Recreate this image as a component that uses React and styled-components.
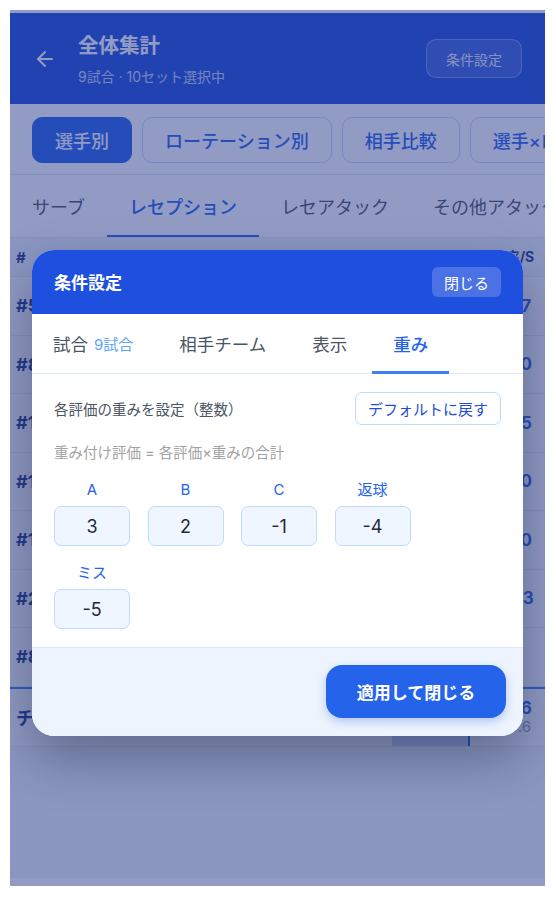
import React from "react";
import styled, { createGlobalStyle } from "styled-components";
import { ArrowLeft } from "lucide-react";

const GlobalStyle = createGlobalStyle`
  html, body { margin: 0; padding: 0; background: #ffffff; }
  body { font-family: "Inter", "Noto Sans CJK JP", sans-serif; }
  * { box-sizing: border-box; }
`;

const Frame = styled.div`
  padding: 10px 11px 12px 10px;
`;

const Screen = styled.div`
  position: relative;
  width: 535px;
  height: 876px;
  overflow: hidden;
  background: #ffffff;
  padding-top: 3px;
  display: flex;
  flex-direction: column;
`;

const Header = styled.header`
  height: 91px;
  flex-shrink: 0;
  background: #1d4ed8;
  display: flex;
  align-items: center;
  gap: 21px;
  padding: 0 23px 0 23px;
  color: #ffffff;
`;

const TitleBlock = styled.div`
  flex: 1;
  display: flex;
  flex-direction: column;
  gap: 7px;
  padding-top: 2px;
`;

const Title = styled.div`
  font-size: 20.5px;
  font-weight: 700;
  line-height: 28px;
`;

const Sub = styled.div`
  font-size: 14px;
  line-height: 20px;
  color: rgba(255, 255, 255, 0.75);
`;

const GhostButton = styled.button`
  width: 96px;
  height: 39px;
  border-radius: 10px;
  border: 1px solid rgba(255, 255, 255, 0.3);
  background: rgba(255, 255, 255, 0.12);
  color: rgba(255, 255, 255, 0.9);
  font-family: inherit;
  font-size: 14px;
`;

const ChipRow = styled.div`
  display: flex;
  gap: 10px;
  padding: 13px 0 0 22px;
  height: 71px;
  flex-shrink: 0;
  overflow: hidden;
  border-bottom: 1px solid #e2e8f0;
`;

const Chip = styled.button`
  flex-shrink: 0;
  height: 46px;
  padding: 0 22px;
  border-radius: 10px;
  border: 1px solid ${(p) => (p.$active ? "#2563eb" : "#bfdbfe")};
  background: ${(p) => (p.$active ? "#2563eb" : "#ffffff")};
  color: ${(p) => (p.$active ? "#ffffff" : "#2563eb")};
  font-family: inherit;
  font-size: 18px;
  font-weight: 500;
  white-space: nowrap;
`;

const TabRow = styled.div`
  display: flex;
  height: 63px;
  flex-shrink: 0;
  border-bottom: 1px solid #e2e8f0;
  overflow: hidden;
`;

const Tab = styled.div`
  position: relative;
  flex-shrink: 0;
  display: flex;
  align-items: center;
  padding: 0 22px;
  font-size: 18px;
  white-space: nowrap;
  color: ${(p) => (p.$active ? "#2563eb" : "#4b5563")};
  font-weight: ${(p) => (p.$active ? 500 : 400)};
  &::after {
    content: "";
    display: ${(p) => (p.$active ? "block" : "none")};
    position: absolute;
    left: 0;
    right: 0;
    bottom: -1px;
    height: 3px;
    background: #2563eb;
  }
`;

const Table = styled.div`
  display: flex;
  flex-direction: column;
  background: #f8fafc;
`;

const Row = styled.div`
  display: grid;
  grid-template-columns: 1fr 78px 25px 50px;
  align-items: center;
  height: ${(p) => p.$h}px;
  border-bottom: 1px solid #e2e8f0;
  border-top: ${(p) => (p.$total ? "2px solid #3b82f6" : "none")};
  background: ${(p) => (p.$head ? "#f1f5f9" : "#f8fafc")};
`;

const NumCell = styled.div`
  padding-left: 6px;
  font-size: ${(p) => (p.$head ? 15 : 18)}px;
  font-weight: 700;
  color: #1e3a8a;
`;

const MarkCell = styled.div`
  align-self: stretch;
  background: ${(p) => (p.$on ? "#c7d7f5" : "transparent")};
  border-right: ${(p) => (p.$on ? "2px solid #2563eb" : "none")};
`;

const ValCell = styled.div`
  display: flex;
  flex-direction: column;
  align-items: center;
  gap: 2px;
  font-size: ${(p) => (p.$head ? 14 : 17)}px;
  font-weight: 700;
  color: ${(p) => (p.$head ? "#1e3a8a" : "#2563eb")};
  line-height: 18px;
`;

const SubVal = styled.span`
  font-size: 15px;
  line-height: 16px;
  font-weight: 400;
  color: #94a3b8;
`;

const Filler = styled.div`
  flex: 1;
  background: #f1f5f9;
`;

const BottomBar = styled.div`
  height: 8px;
  flex-shrink: 0;
  background: #ffffff;
`;

const Overlay = styled.div`
  position: absolute;
  inset: 0;
  background: rgba(37, 56, 137, 0.5);
  display: flex;
  justify-content: center;
  align-items: flex-start;
  padding-top: 240px;
`;

const Modal = styled.div`
  width: 491px;
  background: #ffffff;
  border-radius: 22px;
  overflow: hidden;
  box-shadow: 0 22px 50px rgba(15, 23, 42, 0.35);
`;

const ModalHeader = styled.div`
  height: 64px;
  background: #1e4fdf;
  display: flex;
  align-items: center;
  justify-content: space-between;
  padding: 0 22px;
`;

const ModalTitle = styled.div`
  color: #ffffff;
  font-size: 17px;
  font-weight: 700;
  margin-top: -2px;
`;

const CloseButton = styled.button`
  height: 30px;
  padding: 0 12px;
  border: none;
  border-radius: 6px;
  background: rgba(255, 255, 255, 0.2);
  color: #ffffff;
  font-family: inherit;
  font-size: 15px;
`;

const ModalTabs = styled.div`
  display: flex;
  gap: 4px;
  height: 60px;
  border-bottom: 1px solid #dbeafe;
`;

const ModalTab = styled.div`
  position: relative;
  display: flex;
  align-items: center;
  padding: 0 21px;
  font-size: 17.5px;
  color: ${(p) => (p.$active ? "#2563eb" : "#4b5563")};
  font-weight: ${(p) => (p.$active ? 500 : 400)};
  &::after {
    content: "";
    display: ${(p) => (p.$active ? "block" : "none")};
    position: absolute;
    left: 0;
    right: 0;
    bottom: -1px;
    height: 3px;
    background: #3b82f6;
  }
`;

const Count = styled.span`
  margin-left: 6px;
  font-size: 15px;
  color: #60a5fa;
`;

const Body = styled.div`
  padding: 18px 22px 18px;
`;

const TopLine = styled.div`
  display: flex;
  align-items: center;
  justify-content: space-between;
`;

const Lead = styled.div`
  font-size: 14.5px;
  color: #4b5563;
`;

const ResetButton = styled.button`
  height: 33px;
  padding: 0 12px;
  border: 1.5px solid #bfdbfe;
  border-radius: 7px;
  background: #ffffff;
  color: #1d4ed8;
  font-family: inherit;
  font-size: 15px;
`;

const Formula = styled.div`
  margin-top: 18px;
  font-size: 14.5px;
  line-height: 20px;
  color: #a3a3a3;
`;

const WeightGrid = styled.div`
  margin-top: 17px;
  display: grid;
  grid-template-columns: repeat(4, 76px);
  column-gap: 17.5px;
  row-gap: 17px;
`;

const WeightItem = styled.label`
  display: flex;
  flex-direction: column;
  align-items: center;
  gap: 6px;
`;

const WeightLabel = styled.span`
  font-size: 15px;
  line-height: 20px;
  color: #2563eb;
`;

const WeightInput = styled.input`
  width: 76px;
  height: 40px;
  border: 1.5px solid #bfdbfe;
  border-radius: 7px;
  background: #eff6ff;
  text-align: center;
  font-family: inherit;
  font-size: 18px;
  color: #1e293b;
  outline: none;
`;

const Footer = styled.div`
  display: flex;
  justify-content: flex-end;
  padding: 17px 17px 18px;
  background: #eef4fd;
  border-top: 1px solid #dbeafe;
`;

const ApplyButton = styled.button`
  width: 180px;
  height: 53px;
  border: none;
  border-radius: 16px;
  background: #2563eb;
  color: #ffffff;
  font-family: inherit;
  font-size: 17px;
  font-weight: 600;
  box-shadow: 0 4px 10px rgba(37, 99, 235, 0.3);
`;

const chips = ["選手別", "ローテーション別", "相手比較", "選手×ローテ"];
const tabs = ["サーブ", "レセプション", "レセアタック", "その他アタック"];
const players = [
  ["#5", "1.7"],
  ["#8", "1.0"],
  ["#12", "1.5"],
  ["#10", "1.0"],
  ["#11", "1.0"],
  ["#2", "0.3"],
  ["#8", ""],
];
const weights = [
  ["A", "3"],
  ["B", "2"],
  ["C", "-1"],
  ["返球", "-4"],
  ["ミス", "-5"],
];

export default function App() {
  return (
    <Frame>
      <GlobalStyle />
      <Screen>
        <Header>
          <ArrowLeft size={24} strokeWidth={2} />
          <TitleBlock>
            <Title>全体集計</Title>
            <Sub>9試合 · 10セット選択中</Sub>
          </TitleBlock>
          <GhostButton>条件設定</GhostButton>
        </Header>
        <ChipRow>
          {chips.map((c, i) => (
            <Chip key={c} $active={i === 0}>
              {c}
            </Chip>
          ))}
        </ChipRow>
        <TabRow>
          {tabs.map((t, i) => (
            <Tab key={t} $active={i === 1}>
              {t}
            </Tab>
          ))}
        </TabRow>
        <Table>
          <Row $h={39} $head>
            <NumCell $head>#</NumCell>
            <MarkCell />
            <div />
            <ValCell $head>率/S</ValCell>
          </Row>
          {players.map(([n, v], i) => (
            <Row key={i} $h={58.5}>
              <NumCell>{n}</NumCell>
              <MarkCell />
              <div />
              <ValCell>{v}</ValCell>
            </Row>
          ))}
          <Row $h={60} $total>
            <NumCell>チーム計</NumCell>
            <MarkCell $on />
            <div />
            <ValCell>
              1.6
              <SubVal>0.6</SubVal>
            </ValCell>
          </Row>
        </Table>
        <Filler />
        <BottomBar />
        <Overlay>
          <Modal>
            <ModalHeader>
              <ModalTitle>条件設定</ModalTitle>
              <CloseButton>閉じる</CloseButton>
            </ModalHeader>
            <ModalTabs>
              <ModalTab>
                試合<Count>9試合</Count>
              </ModalTab>
              <ModalTab>相手チーム</ModalTab>
              <ModalTab>表示</ModalTab>
              <ModalTab $active>重み</ModalTab>
            </ModalTabs>
            <Body>
              <TopLine>
                <Lead>各評価の重みを設定（整数）</Lead>
                <ResetButton>デフォルトに戻す</ResetButton>
              </TopLine>
              <Formula>重み付け評価 = 各評価×重みの合計</Formula>
              <WeightGrid>
                {weights.map(([label, value]) => (
                  <WeightItem key={label}>
                    <WeightLabel>{label}</WeightLabel>
                    <WeightInput value={value} readOnly />
                  </WeightItem>
                ))}
              </WeightGrid>
            </Body>
            <Footer>
              <ApplyButton>適用して閉じる</ApplyButton>
            </Footer>
          </Modal>
        </Overlay>
      </Screen>
    </Frame>
  );
}
